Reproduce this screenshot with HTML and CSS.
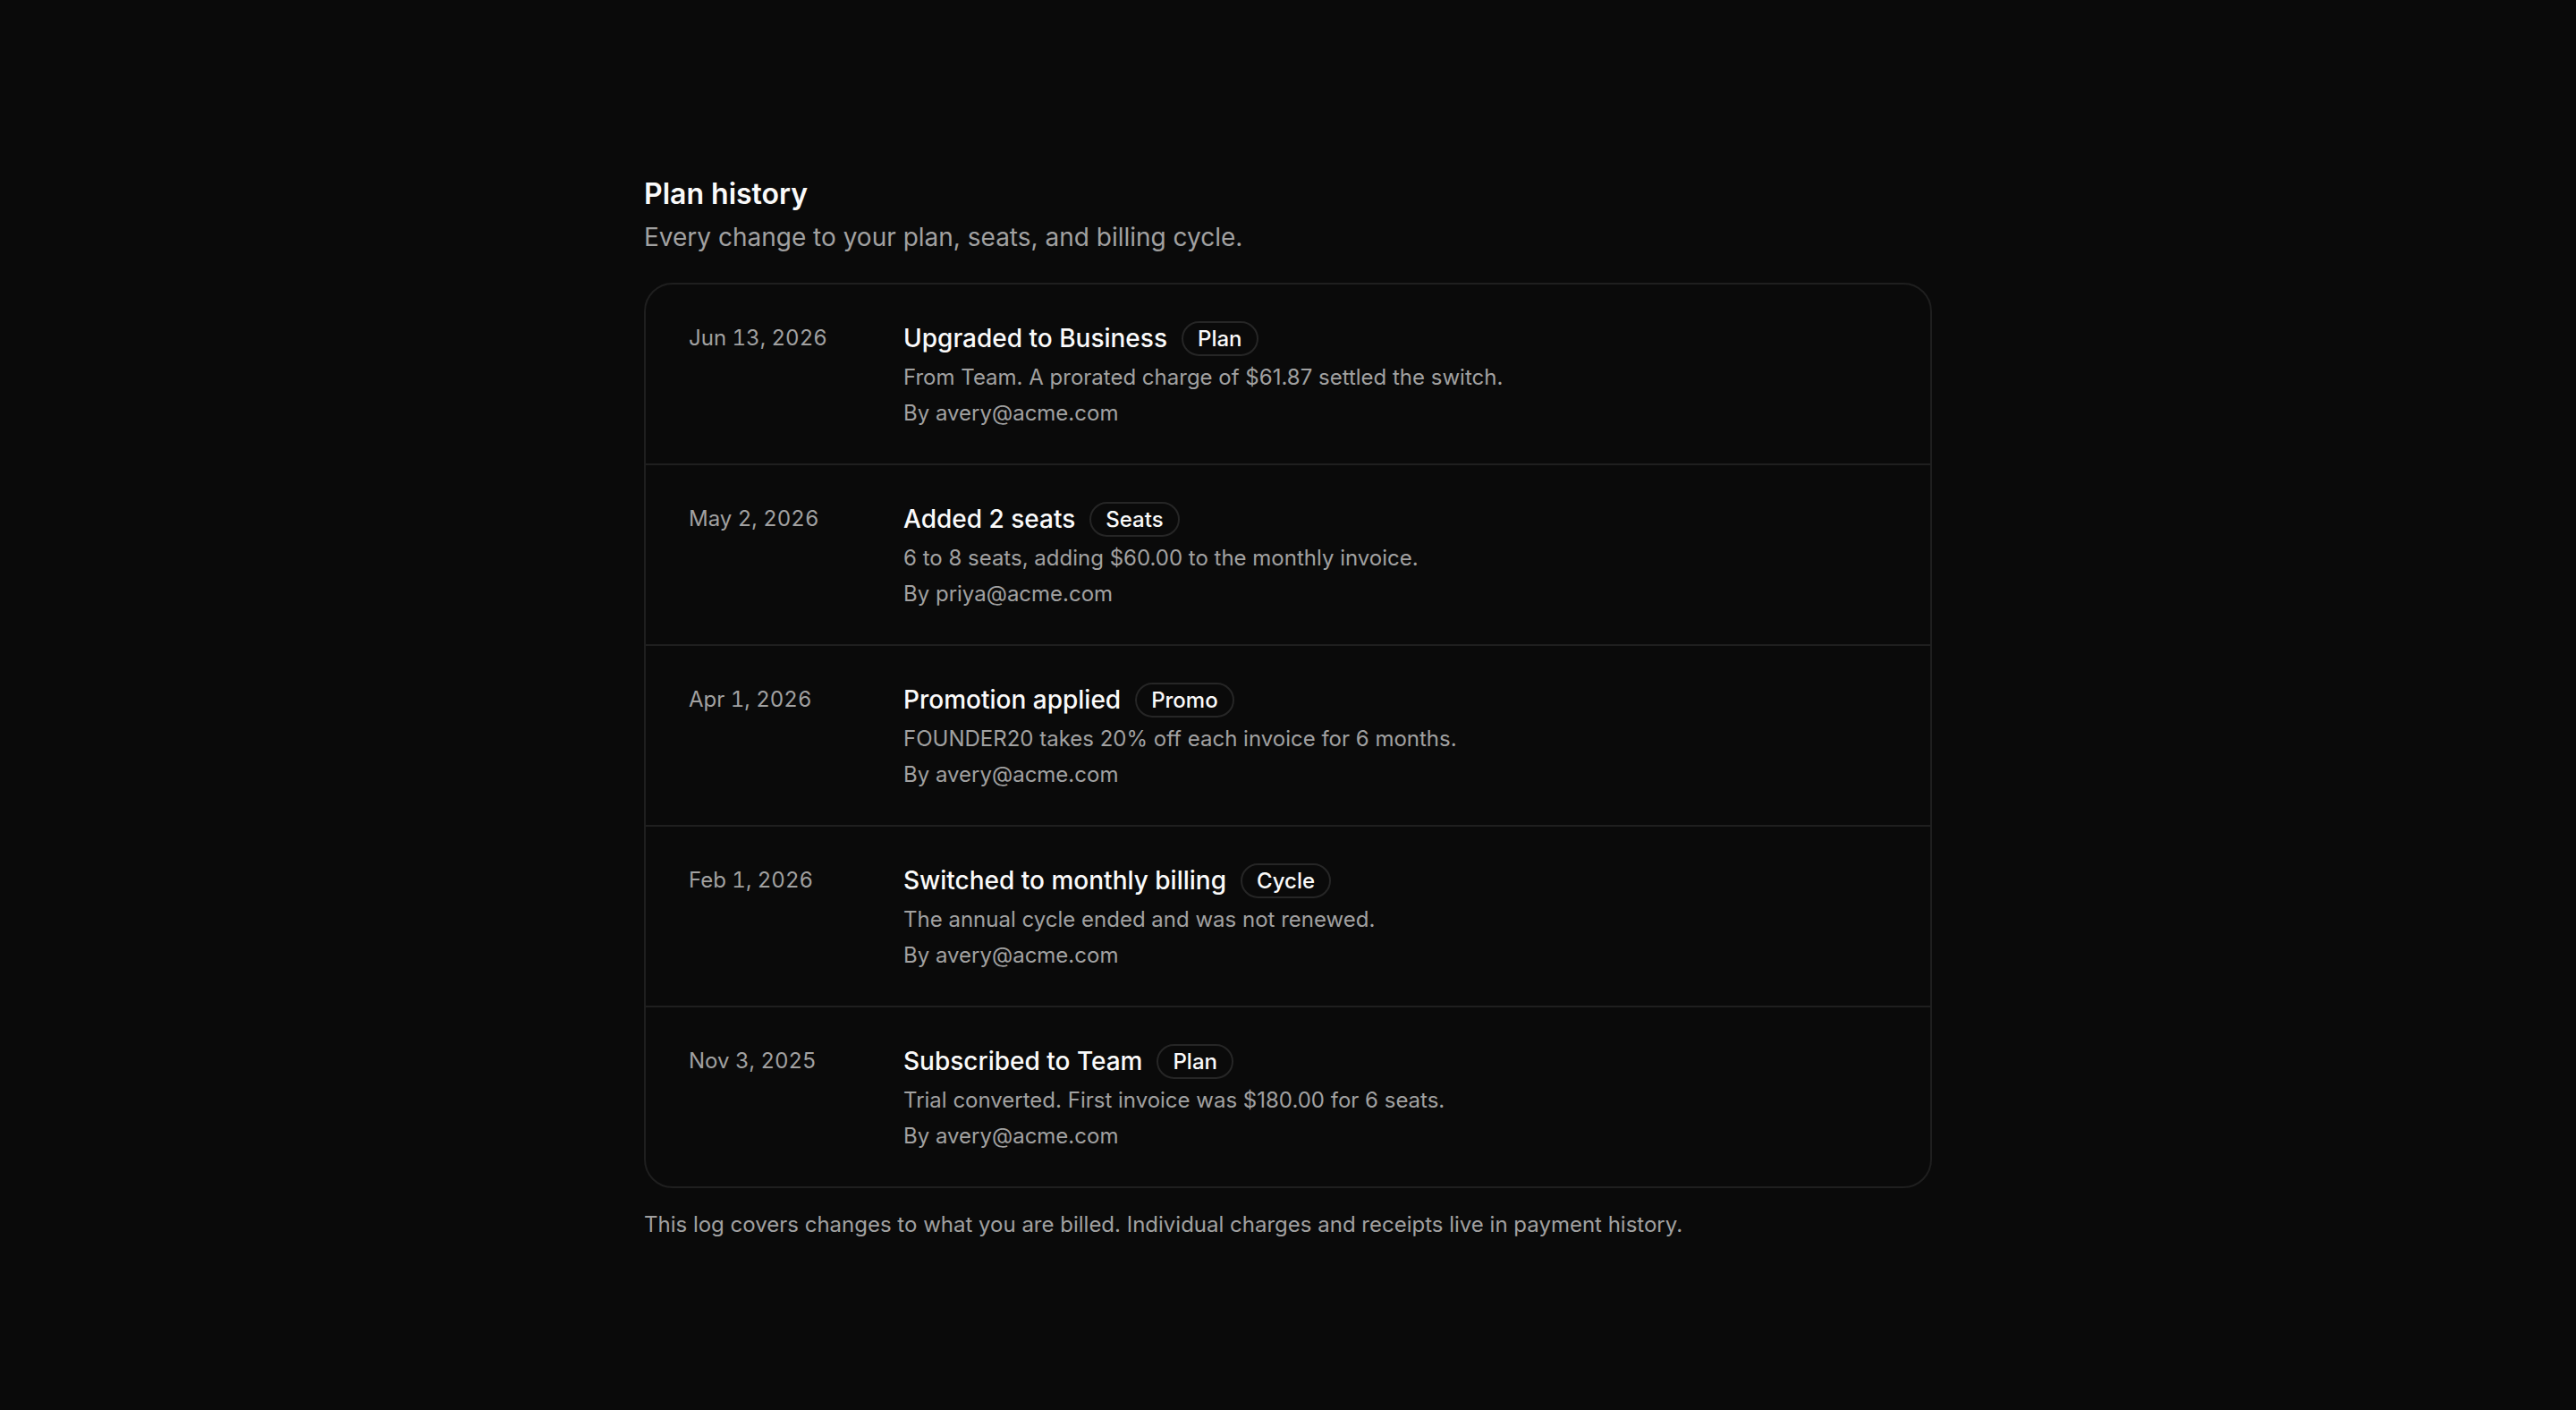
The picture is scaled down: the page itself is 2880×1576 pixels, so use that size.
FILE: index.html
```html
<!DOCTYPE html>
<html lang="en">
<head>
  <meta charset="UTF-8" />
  <meta name="viewport" content="width=device-width, initial-scale=1.0"/>
  <title>Plan history</title>
  <link rel="stylesheet" href="styles.css">
</head>
<body>
  <main class="page">
    <h1 class="title">Plan history</h1>
    <p class="subtitle">Every change to your plan, seats, and billing cycle.</p>

    <ul class="log">
      <li class="entry">
        <div class="date">Jun 13, 2026</div>
        <div class="body">
          <div class="head">
            <span class="what">Upgraded to Business</span>
            <span class="tag">Plan</span>
          </div>
          <p class="desc">From Team. A prorated charge of $61.87 settled the switch.</p>
          <p class="desc">By avery@acme.com</p>
        </div>
      </li>
      <li class="entry">
        <div class="date">May 2, 2026</div>
        <div class="body">
          <div class="head">
            <span class="what">Added 2 seats</span>
            <span class="tag">Seats</span>
          </div>
          <p class="desc">6 to 8 seats, adding $60.00 to the monthly invoice.</p>
          <p class="desc">By priya@acme.com</p>
        </div>
      </li>
      <li class="entry">
        <div class="date">Apr 1, 2026</div>
        <div class="body">
          <div class="head">
            <span class="what">Promotion applied</span>
            <span class="tag">Promo</span>
          </div>
          <p class="desc">FOUNDER20 takes 20% off each invoice for 6 months.</p>
          <p class="desc">By avery@acme.com</p>
        </div>
      </li>
      <li class="entry">
        <div class="date">Feb 1, 2026</div>
        <div class="body">
          <div class="head">
            <span class="what">Switched to monthly billing</span>
            <span class="tag">Cycle</span>
          </div>
          <p class="desc">The annual cycle ended and was not renewed.</p>
          <p class="desc">By avery@acme.com</p>
        </div>
      </li>
      <li class="entry">
        <div class="date">Nov 3, 2025</div>
        <div class="body">
          <div class="head">
            <span class="what">Subscribed to Team</span>
            <span class="tag">Plan</span>
          </div>
          <p class="desc">Trial converted. First invoice was $180.00 for 6 seats.</p>
          <p class="desc">By avery@acme.com</p>
        </div>
      </li>
    </ul>

    <p class="note">This log covers changes to what you are billed. Individual charges and receipts live in payment history.</p>
  </main>
</body>
</html>
```

FILE: styles.css
```css
body {
  font-family: 'Inter', sans-serif;
  background: #0a0a0a;
  color: #fafafa;
  margin: 0;
}

.page {
  max-width: 1440px;
  margin: 0 auto;
  padding: 199px 0 120px;
}

.title {
  font-size: 32px;
  font-weight: 600;
  line-height: 36px;
  margin: 0;
  color: #fafafa;
}

.subtitle {
  font-size: 28px;
  line-height: 36px;
  margin: 12px 0 0;
  color: #a1a1a1;
}

.log {
  list-style: none;
  margin: 33px 0 0;
  padding: 0;
  border: 2px solid #1f1f1f;
  border-radius: 32px;
}

.entry {
  display: flex;
  gap: 48px;
  padding: 40px 48px 36px;
  border-top: 2px solid #1f1f1f;
}

.entry:first-child {
  border-top: none;
}

.date {
  width: 192px;
  flex-shrink: 0;
  font-size: 24px;
  line-height: 40px;
  color: #a1a1a1;
  font-variant-numeric: tabular-nums;
}

.head {
  display: flex;
  align-items: center;
  gap: 16px;
  height: 40px;
  margin-bottom: 4px;
}

.what {
  font-size: 28px;
  font-weight: 500;
  line-height: 40px;
}

.tag {
  font-size: 24px;
  font-weight: 500;
  line-height: 35px;
  padding: 0 16px;
  border: 2px solid #262626;
  border-radius: 999px;
}

.desc {
  font-size: 24px;
  line-height: 40px;
  margin: 0;
  color: #a1a1a1;
}

.note {
  font-size: 24px;
  line-height: 36px;
  margin: 23px 0 0;
  color: #a1a1a1;
}
```
